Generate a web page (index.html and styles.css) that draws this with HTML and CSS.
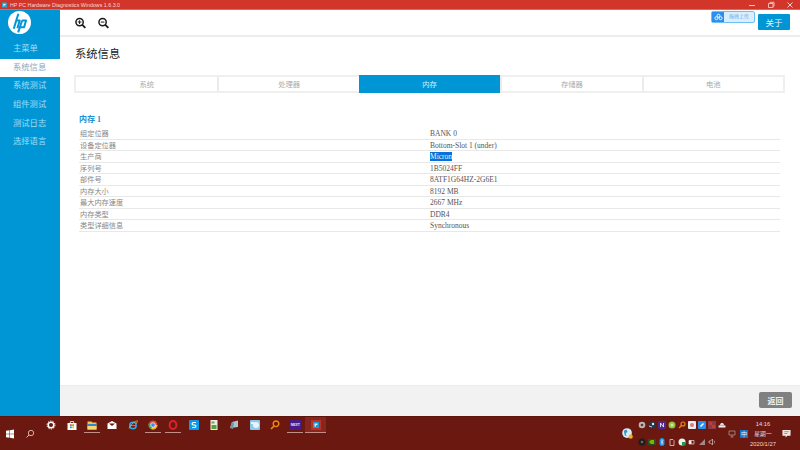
FILE: index.html
```html
<!DOCTYPE html>
<html lang="zh-CN">
<head>
<meta charset="utf-8">
<title>HP PC Hardware Diagnostics Windows</title>
<link rel="stylesheet" href="styles.css">
</head>
<body>
<div class="screen">
  <header class="titlebar">
    <div class="title-left">
      <svg class="app-icon" viewBox="0 0 8 8"><rect width="8" height="8" fill="#2a9fc9"/><path d="M2 2h4v2H4v2H2z" fill="#d8f0f8"/></svg>
      <span>HP PC Hardware Diagnostics Windows 1.6.3.0</span>
    </div>
    <div class="win-controls">
      <svg viewBox="0 0 8 8"><path d="M1 4.500h6" stroke="#f3c9c5" stroke-width="1"/></svg>
      <svg viewBox="0 0 8 8"><path d="M1.500 2.500h4.500v4h-4.500zM3 2.500v-1.200h4v4h-1" fill="none" stroke="#f3c9c5" stroke-width=".9"/></svg>
      <svg viewBox="0 0 8 8"><path d="M1.500 1.500l5 5M6.500 1.500l-5 5" stroke="#f3d5d2" stroke-width="1"/></svg>
    </div>
  </header>

  <div class="app">
    <aside class="sidebar">
      <div class="logo-wrap">
        <svg class="logo" viewBox="0 0 24 24">
          <circle cx="12" cy="12" r="12" fill="#fff"/>
          <g fill="none" stroke="#0096d6" stroke-width="2.100" stroke-linejoin="round">
            <path d="M10.800 2.800L6 18.500"/>
            <path d="M8.300 10h3.900l-2.400 8"/>
            <path d="M14.700 9.900L10.600 22.300"/>
            <path d="M14.500 10h4.300l-2 7h-4.300"/>
          </g>
        </svg>
      </div>
      <nav class="nav">
        <a class="nav-item">主菜单</a>
        <a class="nav-item active">系统信息</a>
        <a class="nav-item">系统测试</a>
        <a class="nav-item">组件测试</a>
        <a class="nav-item">测试日志</a>
        <a class="nav-item">选择语言</a>
      </nav>
    </aside>

    <main class="main">
      <div class="toolbar">
        <div class="zoom-tools">
          <svg class="zoom-icon" viewBox="0 0 12 12"><circle cx="5" cy="5" r="4" fill="none" stroke="#1a1a1a" stroke-width="1.600"/><path d="M8 8l3.300 3.300" stroke="#1a1a1a" stroke-width="2"/><path d="M3 5h4M5 3v4" stroke="#1a1a1a" stroke-width="1.100"/></svg>
          <svg class="zoom-icon" viewBox="0 0 12 12"><circle cx="5" cy="5" r="4" fill="none" stroke="#1a1a1a" stroke-width="1.600"/><path d="M8 8l3.300 3.300" stroke="#1a1a1a" stroke-width="2"/><path d="M3 5h4" stroke="#1a1a1a" stroke-width="1.100"/></svg>
        </div>
        <div class="toolbar-right">
          <div class="upload">
            <span class="upload-icon">
              <svg viewBox="0 0 12 10"><circle cx="6" cy="3.300" r="2" fill="none" stroke="#fff" stroke-width="1.200"/><circle cx="3.200" cy="6.600" r="2" fill="none" stroke="#fff" stroke-width="1.200"/><circle cx="8.800" cy="6.600" r="2" fill="none" stroke="#fff" stroke-width="1.200"/></svg>
            </span>
            <span class="upload-text">拖拽上传</span>
          </div>
          <button class="about">关于</button>
        </div>
      </div>

      <div class="content">
        <h1 class="page-title">系统信息</h1>
        <div class="tabs">
          <div class="tab">系统</div>
          <div class="tab">处理器</div>
          <div class="tab selected">内存</div>
          <div class="tab">存储器</div>
          <div class="tab">电池</div>
        </div>
        <section class="memory">
          <h2 class="memory-title">内存 1</h2>
          <div class="rows">
            <div class="row"><span class="key">组定位器</span><span class="val">BANK 0</span></div>
            <div class="row"><span class="key">设备定位器</span><span class="val">Bottom-Slot 1 (under)</span></div>
            <div class="row"><span class="key">生产商</span><span class="val"><span class="hl">Micron</span></span></div>
            <div class="row"><span class="key">序列号</span><span class="val">1B5024FF</span></div>
            <div class="row"><span class="key">部件号</span><span class="val">8ATF1G64HZ-2G6E1</span></div>
            <div class="row"><span class="key">内存大小</span><span class="val">8192 MB</span></div>
            <div class="row"><span class="key">最大内存速度</span><span class="val">2667 MHz</span></div>
            <div class="row"><span class="key">内存类型</span><span class="val">DDR4</span></div>
            <div class="row"><span class="key">类型详细信息</span><span class="val">Synchronous</span></div>
          </div>
        </section>
      </div>

      <footer class="footer">
        <button class="back">返回</button>
      </footer>
    </main>
  </div>

  <div class="taskbar">
    <div class="start-group">
      <span class="start-item">
        <svg class="tb-icon" viewBox="0 0 10 10"><path d="M1 1.800l3.500-.5v3.400H1zM5 1.200l4-.6v4.100H5zM1 5.300h3.500v3.400L1 8.200zM5 5.300h4v4.100l-4-.6z" fill="#fff"/></svg>
      </span>
      <span class="start-item">
        <svg class="tb-icon" viewBox="0 0 10 10"><circle cx="6" cy="4" r="2.700" fill="none" stroke="#e8d4d0" stroke-width=".8"/><path d="M4 6L1.500 8.500" stroke="#e8d4d0" stroke-width=".9"/></svg>
      </span>
    </div>
    <div class="tasks">
      <span class="task"><svg class="tb-icon" viewBox="0 0 10 10"><circle cx="5" cy="5" r="2.800" fill="none" stroke="#fff" stroke-width="1.500"/><circle cx="5" cy="5" r="4" fill="none" stroke="#fff" stroke-width="1" stroke-dasharray="1.300 1.200"/></svg></span>
      <span class="task"><svg class="tb-icon" viewBox="0 0 10 10"><path d="M.5 3h9v7h-9z" fill="#fff"/><path d="M3.300 3V1.500h3.400V3" fill="none" stroke="#fff" stroke-width=".8"/><path d="M3 4.200h1.800V6H3z" fill="#f25022"/><path d="M5.200 4.200H7V6H5.200z" fill="#7fba00"/><path d="M3 6.400h1.800v1.800H3z" fill="#00a4ef"/><path d="M5.200 6.400H7v1.800H5.200z" fill="#ffb900"/></svg></span>
      <span class="task running"><svg class="tb-icon" viewBox="0 0 10 10"><path d="M.5 1.500h4l1 1h4v7h-9z" fill="#f4c542"/><path d="M.5 4h9v2h-9z" fill="#2b88d8"/><path d="M.5 6h9v3.500h-9z" fill="#f7d774"/></svg></span>
      <span class="task"><svg class="tb-icon" viewBox="0 0 10 10"><path d="M.5 3.500L5 1l4.500 2.500V9h-9z" fill="#fff"/><path d="M2 3.500h6L5 6z" fill="#6a1810"/></svg></span>
      <span class="task"><svg class="tb-icon" viewBox="0 0 10 10"><circle cx="5" cy="5.500" r="3.200" fill="none" stroke="#2fa8e0" stroke-width="1.500"/><path d="M2 5.500h6" stroke="#2fa8e0" stroke-width="1.100"/><path d="M1 8.500C3 4 7 1 9.500.8 9 2.500 8.700 3 8 4" fill="none" stroke="#f0c040" stroke-width=".7"/></svg></span>
      <span class="task running"><svg class="tb-icon" viewBox="0 0 10 10"><circle cx="5" cy="5" r="4.500" fill="#dd4b39"/><path d="M5 5L9.500 5A4.500 4.500 0 0 1 3 9z" fill="#f4c20d"/><path d="M5 5L3 9A4.500 4.500 0 0 1 1 3z" fill="#3aa757"/><circle cx="5" cy="5" r="2.300" fill="#4285f4" stroke="#fff" stroke-width=".7"/></svg></span>
      <span class="task running"><svg class="tb-icon" viewBox="0 0 10 10"><ellipse cx="5" cy="5" rx="3.400" ry="3.900" fill="none" stroke="#e0202b" stroke-width="2"/></svg></span>
      <span class="task"><svg class="tb-icon" viewBox="0 0 10 10"><rect width="10" height="10" rx="1" fill="#0a9bec"/><path d="M7 2.500H4L3 4l1 1h2l1 1-1 1.500H3" fill="none" stroke="#fff" stroke-width="1.200"/></svg></span>
      <span class="task"><svg class="tb-icon" viewBox="0 0 10 10"><path d="M1.500 0h7v10h-7z" fill="#e8efe0"/><path d="M2.500 5h5v4h-5z" fill="#5aa13a"/><path d="M2.500 1.500h3v2h-3z" fill="#7a9e60"/></svg></span>
      <span class="task"><svg class="tb-icon" viewBox="0 0 10 10"><path d="M1 8l2-6 6-1.500V7z" fill="#a8c4d0"/><path d="M1 8l2-6 2 1-1 6z" fill="#7893a0"/></svg></span>
      <span class="task"><svg class="tb-icon" viewBox="0 0 10 10"><rect width="10" height="10" rx="1" fill="#8fc7e8"/><circle cx="6" cy="5" r="3" fill="#e8f4fb"/><path d="M1 2h3v2H1z" fill="#e8f4fb"/></svg></span>
      <span class="task"><svg class="tb-icon" viewBox="0 0 10 10"><circle cx="6" cy="3.800" r="2.800" fill="none" stroke="#f08a10" stroke-width="1.400"/><path d="M4 6L1 9" stroke="#f08a10" stroke-width="1.600"/></svg></span>
      <span class="task running"><span class="next-icon">NEXT</span></span>
      <span class="task current"><span class="hp-task"><svg class="tb-icon-small" viewBox="0 0 10 10"><rect width="10" height="10" fill="#1e9bcf"/><path d="M2.500 2.500h5v2.500H5v2.500H2.500z" fill="#d8f0f8"/></svg></span></span>
    </div>
    <div class="tray">
      <svg class="globe" viewBox="0 0 12 12"><circle cx="5.500" cy="5.500" r="5.300" fill="#d8ecf5"/><path d="M2 3l3-1.500L6 4 4 6l1 3-2-1z" fill="#3a8fc4"/><circle cx="9.500" cy="9.500" r="2.300" fill="#f2b01e"/></svg>
      <div class="tray-grid">
        <svg viewBox="0 0 8 8"><circle cx="4" cy="4" r="3.300" fill="#bdb3b0"/><circle cx="4" cy="4" r="1.300" fill="#5a3a36"/></svg>
        <svg viewBox="0 0 8 8"><circle cx="4" cy="4" r="3.500" fill="#22364e"/><circle cx="5" cy="3" r="1.200" fill="#e8edf2"/><path d="M1 5l3 1" stroke="#e8edf2" stroke-width=".8"/></svg>
        <svg viewBox="0 0 8 8"><rect width="8" height="8" rx="1" fill="#4b2a8c"/><path d="M2.500 6V2l3 4V2" fill="none" stroke="#fff" stroke-width=".8"/></svg>
        <svg viewBox="0 0 8 8"><circle cx="4" cy="4" r="3.500" fill="#8cc63f"/><circle cx="4" cy="4" r="1.500" fill="#d6e8a8"/></svg>
        <svg viewBox="0 0 8 8"><circle cx="5" cy="3" r="2" fill="none" stroke="#f08a10" stroke-width="1.100"/><path d="M3.500 4.500L1 7" stroke="#f08a10" stroke-width="1.200"/></svg>
        <svg viewBox="0 0 8 8"><rect width="8" height="8" rx="1" fill="#e6eef2"/><circle cx="4" cy="4" r="2" fill="#e57878"/></svg>
        <svg viewBox="0 0 8 8"><rect width="8" height="8" rx="1" fill="#2b8ff0"/><path d="M2 5l3-3 1 1-3 3z" fill="#fff"/></svg>
        <svg viewBox="0 0 8 8"><rect width="8" height="8" fill="#8a3a44"/><path d="M1 1h3v3H1zM4 4h3v3H4z" fill="#c23a3a"/></svg>
        <svg viewBox="0 0 8 8"><path d="M.5 4.500h7v2h-7z" fill="#eee"/><path d="M1.500 4.500L3 2h2l1.500 2.500z" fill="#ddd"/></svg>
        <svg viewBox="0 0 8 8"><circle cx="4" cy="4" r="3.500" fill="#1d1d1d"/><circle cx="4" cy="4" r="1.300" fill="#666"/></svg>
        <svg viewBox="0 0 8 8"><rect y="1" width="8" height="6" fill="#2f4a22"/><path d="M1 4l2-2h3v4H3z" fill="#76b900"/></svg>
        <svg viewBox="0 0 8 8"><rect x="1.500" width="5" height="8" rx="2.500" fill="#1e8fe6"/><path d="M3 2.500l2 3-1 1v-5l1 1-2 3" fill="none" stroke="#fff" stroke-width=".5"/></svg>
        <svg viewBox="0 0 8 8"><path d="M2 1.500h3l1 1V7.500H2z" fill="none" stroke="#cdbcb8" stroke-width=".9"/></svg>
        <svg viewBox="0 0 8 8"><circle cx="4" cy="4" r="3.500" fill="#f0f0f0"/><path d="M4 4h3.500v3.500H4z" fill="#1e9e4a"/></svg>
        <svg viewBox="0 0 8 8"><path d="M1 2.500h5v3.500H1z" fill="none" stroke="#d8c8c4" stroke-width=".8"/><path d="M1 2.500h2.500v3.500H1z" fill="#eee"/></svg>
        <svg viewBox="0 0 8 8"><path d="M1 7L7 1v6z" fill="#a08a86"/></svg>
        <svg viewBox="0 0 8 8"><path d="M1 3h1.500L4.500 1v6L2.500 5H1z" fill="none" stroke="#d8c8c4" stroke-width=".7"/><path d="M6 2.500c.8 1 .8 2 0 3" fill="none" stroke="#d8c8c4" stroke-width=".6"/></svg>
      </div>
      <svg class="tray-side" viewBox="0 0 8 8"><path d="M1 1h6v4H1zM4 5v2M2.500 7h3" fill="none" stroke="#a89490" stroke-width=".8"/></svg>
      <span class="ime">中</span>
      <div class="clock"><span>14:16</span><span>星期一</span><span>2020/1/27</span></div>
      <svg class="notify" viewBox="0 0 10 10"><path d="M.5 1h9v6.500H6L4 9.500V7.500H.5z" fill="#f0e6e3"/><path d="M2.500 3h5M2.500 5h3.500" stroke="#8a5a52" stroke-width=".7"/></svg>
    </div>
  </div>
</div>
</body>
</html>
```

FILE: styles.css
```css
* { box-sizing: border-box; margin: 0; padding: 0; }
html, body { width: 800px; height: 450px; overflow: hidden; }
body { font-family: "Liberation Serif", "Noto Sans CJK SC", serif; background: #fff; }

.screen { width: 800px; height: 450px; display: flex; flex-direction: column; }

.titlebar {
  height: 10px; flex: none; background: #d2352a; color: #f6d9d6;
  border-bottom: 1px solid #e2685e;
  display: flex; justify-content: space-between; align-items: center;
  font-family: "Liberation Sans", sans-serif; font-size: 5.300px;
}
.title-left { display: flex; align-items: center; gap: 3px; padding-left: 2px; }
.app-icon { width: 5px; height: 6px; }
.win-controls { display: flex; gap: 11px; padding-right: 6px; }
.win-controls svg { width: 8px; height: 8px; }

.app { flex: 1; display: flex; min-height: 0; }

.sidebar { width: 60px; flex: none; background: #0096d6; display: flex; flex-direction: column; }
.logo-wrap { height: 30px; padding: 1px 0 0 8px; }
.logo { width: 23px; height: 23px; display: block; }
.nav { display: flex; flex-direction: column; }
.nav-item {
  height: 18.700px; line-height: 18.700px; padding-left: 13px;
  font-size: 8.300px; color: #a5dcf3;
}
.nav-item.active { background: #fff; color: #8aa8bd; }

.main { flex: 1; min-width: 0; display: flex; flex-direction: column; }

.toolbar {
  height: 27px; flex: none; border-bottom: 2px solid #ececec;
  display: flex; justify-content: space-between;
}
.zoom-tools { display: flex; gap: 12px; padding: 7px 0 0 15px; }
.zoom-icon { width: 11px; height: 12px; }
.toolbar-right { display: flex; gap: 3px; padding: 1px 10px 0 0; align-items: flex-start; }
.upload { display: flex; width: 44px; height: 12px; border: 1px solid #6cc0f5; border-radius: 2px; background: #d9efff; }
.upload-icon { width: 12px; background: #2b8ff0; display: flex; align-items: center; justify-content: center; }
.upload-icon svg { width: 9px; height: 8px; }
.upload-text { flex: 1; text-align: center; font-size: 5px; line-height: 10px; color: #6aaee8; }
.about {
  width: 32px; height: 16px; margin-top: 3px; border: none; border-radius: 1px;
  background: #0096d6; color: #e4f5fc; font-family: inherit; font-size: 8.500px;
}

.content { flex: 1; min-height: 0; padding: 0 15px 0 14px; }
.page-title { font-size: 11.300px; font-weight: 400; color: #222; line-height: 14px; padding: 10px 0 0 1px; height: 38px; }
.tabs { display: grid; grid-template-columns: repeat(5, 1fr); width: 711px; height: 18px; border: 2px solid #efefef; }
.tab {
  border-left: 2px solid #ebebeb; color: #aaa; font-size: 7.300px;
  display: flex; align-items: center; justify-content: center;
}
.tab:first-child { border-left: none; }
.tab.selected { background: #0096d6; color: #d6f0fb; border-left: none; margin: -2px 0; }

.memory { padding: 21px 5px 0 5px; }
.memory-title { font-size: 8px; font-weight: 700; color: #1a92d4; line-height: 11px; height: 14px; }
.row {
  display: grid; grid-template-columns: 350px 1fr; height: 11.500px; line-height: 11.500px;
  border-bottom: 1px solid #e8e8e8; padding-left: 1px;
}
.key { color: #888; font-size: 7.200px; line-height: 13px; }
.val { color: #555; font-size: 7.500px; }
.hl { background: #0a6fd6; color: #dff; }

.footer {
  height: 31px; flex: none; background: #f2f2f2; border-top: 1px solid #ebebeb;
  display: flex; justify-content: flex-end; align-items: flex-start; padding: 6px 8px 0 0;
}
.back {
  width: 33px; height: 16px; border: none; border-radius: 2px;
  background: #808080; color: #f0f0f0; font-family: inherit; font-size: 8px; font-weight: 700;
}

.taskbar { height: 34px; flex: none; background: #6a1810; display: flex; border-top: 1px solid #5c140d; }
.start-group { width: 41px; display: flex; align-items: center; }
.start-item { width: 20px; display: flex; justify-content: center; }
.tb-icon { width: 10px; height: 10px; display: block; }
.tb-icon-small { width: 6px; height: 6px; display: block; }
.tasks { display: flex; align-items: flex-start; }
.task {
  width: 20.350px; height: 16px; display: flex; align-items: center; justify-content: center;
  padding-bottom: 1px;
}
.task.running { background: linear-gradient(#c28f88, #c28f88) center bottom / 16px 1px no-repeat; }
.task.current { background: #86271d; border-bottom: 1px solid #c28f88; padding-bottom: 0; }
.hp-task { padding: 2px; background: #c0302a; display: block; }
.next-icon {
  width: 11px; height: 10px; background: #4a1a88; color: #efe6f7;
  font: 700 3.500px/10px "Liberation Sans", sans-serif; text-align: center; display: block;
}

.tray { margin-left: auto; display: flex; align-items: center; padding-right: 9px; }
.globe { width: 11px; height: 11px; margin-right: 5px; }
.tray-grid { display: grid; grid-template-columns: repeat(9, 8px); column-gap: 2px; row-gap: 9px; width: 88px; }
.tray-grid svg { width: 8px; height: 8px; display: block; }
.tray-side { width: 8px; height: 8px; margin-left: 2px; }
.ime {
  width: 8px; height: 8px; margin-left: 4px; background: #1677c8; color: #e8f4ff;
  font: 6px/8px "Noto Sans CJK SC", sans-serif; text-align: center; display: block;
}
.clock {
  width: 30px; display: flex; flex-direction: column; align-items: center;
  color: #eadbd8; font: 5.800px/10px "Liberation Sans", "Noto Sans CJK SC", sans-serif;
  white-space: nowrap;
}
.notify { width: 9px; height: 9px; margin-left: 4px; }
```
